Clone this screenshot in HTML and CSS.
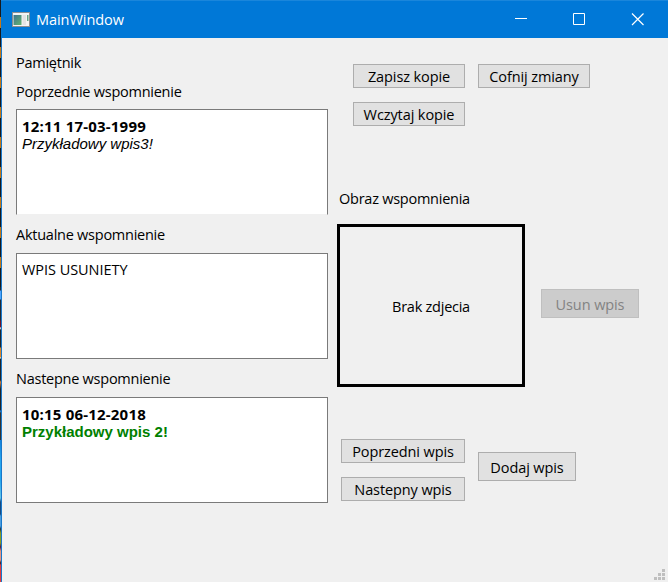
FILE: index.html
```html
<!DOCTYPE html>
<html lang="pl">
<head>
<meta charset="utf-8">
<title>MainWindow</title>
<link rel="stylesheet" href="styles.css">
</head>
<body>
<div class="desktop">
<div class="window">
  <header class="titlebar">
    <svg class="app-icon" width="18" height="15" viewBox="0 0 18 15">
      <defs><linearGradient id="g" x1="0" y1="0" x2="1" y2="1"><stop offset="0" stop-color="#3f7391"/><stop offset="1" stop-color="#62b56e"/></linearGradient></defs>
      <rect width="18" height="15" fill="#8c8f92"/>
      <rect x="1" y="1" width="16" height="13" fill="#f4f4f4"/>
      <rect x="1.500" y="3" width="8" height="10" fill="url(#g)"/>
      <rect x="10.500" y="3" width="3.500" height="10" fill="#e3e3e3"/>
      <rect x="15" y="3" width="1.500" height="6" fill="#67a587"/>
    </svg>
    <span class="title">MainWindow</span>
    <svg class="controls" width="130" height="14" viewBox="0 0 130 14" fill="none" stroke="#fff">
      <path d="M0 5.500h12M58.500 .5h11v11h-11z"/>
      <path d="M117 .5l11.500 11.500M128.500 .5L117 12" stroke-width="1.200"/>
    </svg>
  </header>
  <main class="content">
    <section class="entries">
      <div class="label heading">Pamiętnik</div>
      <div class="label previous">Poprzednie wspomnienie</div>
      <div class="box box-open"><b class="date">12:11 17-03-1999</b><i class="entry">Przykładowy wpis3!</i></div>
      <div class="label current">Aktualne wspomnienie</div>
      <div class="box"><span class="deleted">WPIS USUNIETY</span></div>
      <div class="label next">Nastepne wspomnienie</div>
      <div class="box"><b class="date">10:15 06-12-2018</b><b class="entry green">Przykładowy wpis 2!</b></div>
    </section>
    <section class="side">
      <div class="backup">
        <button class="save">Zapisz kopie</button><button class="undo">Cofnij zmiany</button>
        <button class="load">Wczytaj kopie</button>
      </div>
      <div class="label picture-label">Obraz wspomnienia</div>
      <div class="picture-row">
        <div class="picture"><span>Brak zdjecia</span></div>
        <button class="tall remove" disabled>Usun wpis</button>
      </div>
      <div class="navigation">
        <div class="steps"><button class="prev-btn">Poprzedni wpis</button><button class="next-btn">Nastepny wpis</button></div>
        <button class="tall add">Dodaj wpis</button>
      </div>
    </section>
    <svg class="grip" width="11" height="11" viewBox="0 0 11 11" fill="#bfbfbf"><path d="M8 0h3v3H8zM4 4h3v3H4zM8 4h3v3H8zM0 8h3v3H0zM4 8h3v3H4zM8 8h3v3H8z"/></svg>
  </main>
</div>
</div>
</body>
</html>
```
FILE: styles.css
```css
* { box-sizing: border-box; }
body { margin: 0; overflow: hidden; font: 14.5px/20px "Open Sans", "Noto Sans", sans-serif; letter-spacing: -0.25px; color: #000; }
.desktop {
  width: 668px; height: 582px; padding-left: 1px;
  background:
    linear-gradient(#1584dc 0 2px, #25a5ee 20px 40px, #66c6e8 58px, #174a80 62px 74px, #4c9ee0 76px 86px, #26303c 89px, #8a9b20 93px 103px, #5a1642 107px, #e79480 111px 120px, #301820 123px, #e23b40 125px) 0 440px / 1px 142px no-repeat,
    linear-gradient(#202832 0 3px, #4ea5ff 4px 12px, #202832 13px 33px, #6e1025 34px 40px, #fff 41px, #20252b 43px 60px, #e08628 61px 70px, #fff 71px, #202428 72px 93px, #d97d38 95px, #202428 102px 123px, #208cf0 124px, #333 126px) 0 287px / 1px 153px no-repeat,
    repeating-linear-gradient(#17191c 0 17px, #c77814 17px 28px, #17191c 28px 30px);
}
.window { height: 582px; border-left: 1px solid #1878ca; background: #f0f0f0; }
.titlebar {
  height: 38px; display: flex; align-items: center;
  margin-left: -1px; padding: 0 23px 0 11px;
  background: #0078d7; border-top: 1px solid #1a86db; color: #fff;
}
.title { margin-left: 6px; letter-spacing: -0.05px; line-height: 20px; padding-top: 1px; }
.controls { margin-left: auto; }
.content { position: relative; height: 544px; display: flex; padding-left: 14px; }
.label { height: 20px; white-space: nowrap; }
.entries { width: 312px; padding-top: 15px; }
.previous { margin-top: 9px; }
.box { height: 106px; border: 1px solid #7a7a7a; background: #fff; padding: 6px 5px; white-space: nowrap; }
.box-open { margin-top: 7px; border-bottom-color: #f0f0f0; }
.current { margin-top: 10px; }
.current + .box { margin-top: 8px; }
.next { margin-top: 10px; }
.next + .box { margin-top: 8px; }
.date, .entry, .deleted { display: block; }
.date { font-size: 15px; line-height: 18px; letter-spacing: 0.2px; padding-top: 1px; }
.box-open .date { line-height: 17px; padding-top: 2px; }
.entry { font: 15px/17px "Liberation Sans", sans-serif; letter-spacing: 0; }
i.entry { font-style: italic; }
.deleted { letter-spacing: -0.05px; }
.green { color: #008000; font-weight: bold; }
.side { width: 310px; margin-left: 9px; padding-top: 26px; }
.backup { display: grid; grid-template-columns: 112px 112px; grid-auto-rows: 24px; gap: 14px 13px; margin-left: 16px; }
button { height: 24px; padding: 1px 0 0; border: 1px solid #adadad; background: #e1e1e1; font: inherit; letter-spacing: -0.1px; line-height: 20px; color: #000; white-space: nowrap; }
.tall { width: 98px; height: 29px; padding-top: 2px; }
.picture-label { margin: 63px 0 0 2px; }
.picture-row { display: flex; align-items: flex-start; gap: 16px; margin-top: 15px; }
.picture { width: 188px; height: 163px; border: 3px solid #000; display: flex; align-items: center; justify-content: center; padding-top: 2px; }
.remove { margin-top: 65px; background: #ccc; border-color: #bfbfbf; color: #838383; }
.navigation { display: flex; gap: 13px; margin: 52px 0 0 4px; }
.steps { width: 124px; display: grid; gap: 14px; }
.add { margin-top: 13px; }
.grip { position: absolute; right: 3px; bottom: 2px; }
```
